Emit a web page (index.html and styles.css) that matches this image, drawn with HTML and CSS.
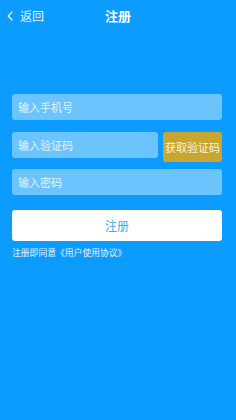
FILE: index.html
```html
<!DOCTYPE html>
<html lang="zh">
<head>
<meta charset="utf-8">
<link rel="stylesheet" href="styles.css">
</head>
<body>
<div class="page">
  <header class="header">
    <div class="back">
      <svg class="chev" width="6" height="10" viewBox="0 0 6 10"><path d="M5 1 L1.3 5 L5 9" fill="none" stroke="#e6f3ff" stroke-width="1.3" stroke-linecap="round" stroke-linejoin="round"/></svg>
      <span class="back-text">返回</span>
    </div>
    <div class="title">注册</div>
  </header>
  <form class="form">
    <div class="field">输入手机号</div>
    <div class="row">
      <div class="field grow">输入验证码</div>
      <div class="code-btn">获取验证码</div>
    </div>
    <div class="field f3">输入密码</div>
    <div class="submit">注册</div>
    <div class="agree">注册即同意《用户使用协议》</div>
  </form>
</div>
</body>
</html>
```
FILE: styles.css
```css
html, body {
  margin: 0;
  padding: 0;
  background: #0c9bff;
}
body {
  width: 236px;
  height: 420px;
  font-family: "Noto Sans CJK SC", "Noto Sans", sans-serif;
  color: #fff;
}
.page {
  display: flex;
  flex-direction: column;
}
.header {
  position: relative;
  height: 31px;
  display: flex;
  align-items: center;
  justify-content: center;
}
.back {
  position: absolute;
  left: 7px;
  top: 0;
  height: 31px;
  display: flex;
  align-items: center;
  gap: 7px;
  color: #e6f3ff;
  font-size: 12px;
}
.chev { display: block; }
.title {
  font-size: 13px;
  font-weight: bold;
  color: #fff;
}
.form {
  margin: 63px 14px 0 12px;
  display: flex;
  flex-direction: column;
}
.field {
  height: 26px;
  background: #6cc4ff;
  border-radius: 3px;
  display: flex;
  align-items: center;
  padding-left: 6px;
  font-size: 11px;
  color: #e2f2ff;
}
.row {
  margin-top: 12px;
  display: flex;
  align-items: flex-start;
  gap: 5px;
}
.grow { flex: 1; }
.code-btn {
  width: 59px;
  height: 30px;
  background: #c9a630;
  border-radius: 3px;
  display: flex;
  align-items: center;
  justify-content: center;
  font-size: 11px;
  color: #fbf3d8;
}
.f3 { margin-top: 7px; }
.submit {
  margin-top: 15px;
  height: 31px;
  background: #fff;
  border-radius: 3px;
  display: flex;
  align-items: center;
  justify-content: center;
  font-size: 12px;
  color: #4aa7ea;
}
.agree {
  margin-top: 6px;
  font-size: 8.8px;
  color: #e6f3ff;
  line-height: 12px;
}
```
